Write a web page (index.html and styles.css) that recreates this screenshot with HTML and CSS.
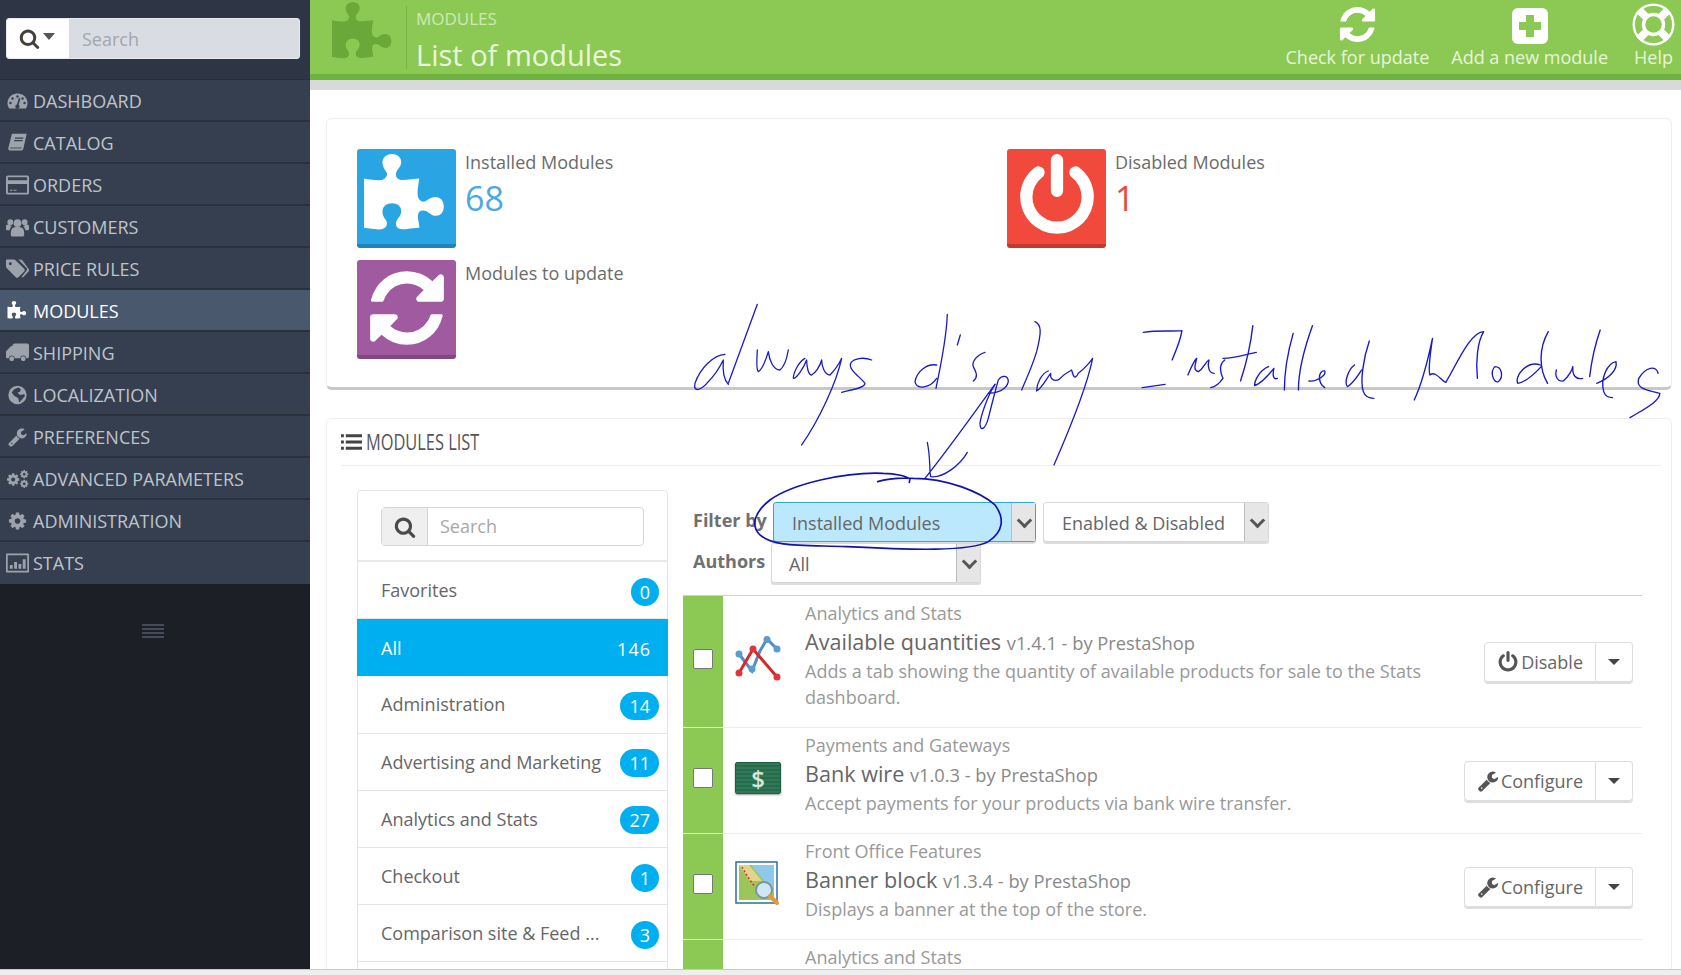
FILE: index.html
```html
<!DOCTYPE html>
<html lang="en">
<head>
    <meta charset="UTF-8">
    <title>List of modules</title>
    <link rel="stylesheet" href="styles.css">
</head>
<body>
    <svg class="defs" width="0" height="0">
        <symbol id="i-search" viewBox="0 0 1792 1792"><path d="M1216 832q0-185-131.500-316.500t-316.500-131.500-316.500 131.500-131.500 316.500 131.500 316.500 316.500 131.500 316.500-131.500 131.500-316.500zm512 832q0 52-38 90t-90 38q-54 0-90-38l-343-342q-179 124-399 124-143 0-273.500-55.500t-225-150-150-225-55.500-273.500 55.500-273.500 150-225 225-150 273.500-55.500 273.500 55.500 225 150 150 225 55.500 273.500q0 220-124 399l343 343q37 37 37 90z"/></symbol>
        <symbol id="i-puzzle" viewBox="0 0 1792 1792"><path d="M1664 1098q0 81-44.500 135t-123.500 54q-41 0-77.500-17.500t-59-38-56.500-38-71-17.500q-110 0-110 124 0 39 16 115t15 115v5q-22 0-33 1-34 3-97.500 11.500t-115.500 13.500-98 5q-61 0-103-26.500t-42-83.500q0-37 17.500-71t38-56.500 38-59 17.500-77.500q0-79-54-123.500t-135-44.500q-84 0-143 45.500t-59 127.500q0 43 15 83t33.500 64.500 33.500 53 15 50.500q0 45-46 89-37 35-117 35-95 0-245-24-9-2-27.500-4t-27.500-4l-13-2q-1 0-3-1-2 0-2-1v-1024q2 1 17.500 3.500t34 5 21.500 3.500q150 24 245 24 80 0 117-35 46-44 46-89 0-22-15-50.500t-33.500-53-33.500-64.500-15-83q0-82 59-127.500t144-45.500q80 0 134 44.500t54 123.500q0 41-17.500 77.500t-38 59-38 56.500-17.500 71q0 57 42 83.500t103 26.500q64 0 180-15t163-17v2q-1 2-3.500 17.500t-5 34-3.500 21.500q-24 150-24 245 0 80 35 117 44 46 89 46 22 0 50.500-15t53-33.500 64.500-33.500 83-15q82 0 127.500 59t45.500 143z"/></symbol>
        <symbol id="i-refresh" viewBox="0 0 1792 1792"><path d="M1639 1056q0 5-1 7-64 268-268 434.500t-478 166.500q-146 0-282.500-55t-243.500-157l-129 129q-19 19-45 19t-45-19-19-45v-448q0-26 19-45t45-19h448q26 0 45 19t19 45-19 45l-137 137q71 66 161 102t187 36q134 0 250-65t186-179q11-17 53-117 8-23 30-23h192q13 0 22.500 9.500t9.500 22.500zm25-800v448q0 26-19 45t-45 19h-448q-26 0-45-19t-19-45 19-45l138-138q-148-137-349-137-134 0-250 65t-186 179q-11 17-53 117-8 23-30 23h-199q-13 0-22.500-9.500t-9.500-22.500v-7q65-268 270-434.500t480-166.500q146 0 284 55.500t245 156.500l130-129q19-19 45-19t45 19 19 45z"/></symbol>
        <symbol id="i-wrench" viewBox="0 0 1792 1792"><path d="M448 1472q0-26-19-45t-45-19-45 19-19 45 19 45 45 19 45-19 19-45zm644-420l-682 682q-37 37-90 37-52 0-91-37l-106-108q-38-36-38-90 0-53 38-91l681-681q39 98 114.500 173.500t173.500 114.500zm634-435q0 39-23 106-47 134-164.500 217.500t-258.500 83.500q-185 0-316.500-131.500t-131.500-316.500 131.500-316.500 316.500-131.500q58 0 121.500 16.500t107.500 46.500q16 11 16 28t-16 28l-293 169v224l193 107q5-3 79-48.500t135.500-81 70.500-35.500q15 0 23.500 10t8.500 25z"/></symbol>
        <symbol id="i-cog" viewBox="0 0 1792 1792"><path d="M1152 896q0-106-75-181t-181-75-181 75-75 181 75 181 181 75 181-75 75-181zm512-109v222q0 12-8 23t-20 13l-185 28q-19 54-39 91 35 50 107 138 10 12 10 25t-9 23q-27 37-99 108t-94 71q-12 0-26-9l-138-108q-44 23-91 38-16 136-29 186-7 28-36 28h-222q-14 0-24.500-8.500t-11.500-21.500l-28-184q-49-16-90-37l-141 107q-10 9-25 9-14 0-25-11-126-114-165-168-7-10-7-23 0-12 8-23 15-21 51-66.500t54-70.500q-27-50-41-99l-183-27q-13-2-21-12.500t-8-23.500v-222q0-12 8-23t19-13l186-28q14-46 39-92-40-57-107-138-10-12-10-24 0-10 9-23 26-36 98.500-107.500t94.500-71.500q13 0 26 10l138 107q44-23 91-38 16-136 29-186 7-28 36-28h222q14 0 24.500 8.500t11.500 21.500l28 184q49 16 90 37l142-107q9-9 24-9 13 0 25 10 129 119 165 170 7 8 7 22 0 12-8 23-15 21-51 66.500t-54 70.500q26 50 41 98l183 28q13 2 21 12.500t8 23.500z"/></symbol>
        <symbol id="i-power" viewBox="0 0 1792 1792"><path d="M1664 896q0 156-61 298t-164 245-245 164-298 61-298-61-245-164-164-245-61-298q0-182 80.500-343t226.500-270q43-32 95.500-25t83.500 50q32 42 24.500 94.500t-49.500 84.500q-98 74-151.500 181t-53.500 228q0 104 40.500 198.500t109.500 163.500 163.500 109.500 198.500 40.500 198.500-40.500 163.500-109.500 109.500-163.500 40.500-198.500q0-121-53.500-228t-151.500-181q-42-32-49.500-84.500t24.500-94.500q31-43 84-50t95 25q146 109 226.500 270t80.500 343zm-640-768v640q0 52-38 90t-90 38-90-38-38-90v-640q0-52 38-90t90-38 90 38 38 90z"/></symbol>
        <symbol id="i-gauge" viewBox="0 0 24 24"><path d="M12 3C5.500 3 0 8 0 14.500c0 2.500.8 4.600 2 6.500h20c1.200-1.900 2-4 2-6.500C24 8 18.500 3 12 3z"/><g fill="#363f50"><circle cx="12" cy="6.500" r="1.500"/><circle cx="6" cy="9" r="1.500"/><circle cx="3.500" cy="14.500" r="1.500"/><circle cx="20.500" cy="14.500" r="1.500"/><circle cx="18" cy="9" r="1.500"/><path d="M13.500 8.500l2 .6-2 7.500a2.600 2.600 0 1 1-2-.5z"/></g></symbol>
        <symbol id="i-book" viewBox="0 0 24 24"><path d="M6 1h17l-4 18c-.3 1.200-1 2-2.200 2H3c-1.500 0-2.500-1.400-2-3L5 2.500C5.200 1.600 5.400 1 6 1z"/><path d="M9 6h10M8 9h10" stroke="#363f50" stroke-width="1.500"/><path d="M3 18h14" stroke="#363f50" stroke-width="1"/></symbol>
        <symbol id="i-card" viewBox="0 0 24 20"><path d="M2 0h20a2 2 0 0 1 2 2v16a2 2 0 0 1-2 2H2a2 2 0 0 1-2-2V2a2 2 0 0 1 2-2zm0 2v3h20V2zm0 7v9h20V9zm2 6h3v1H4zm4 0h3v1H8z" fill-rule="evenodd"/></symbol>
        <symbol id="i-users" viewBox="0 0 24 20"><circle cx="12" cy="6" r="4"/><circle cx="4.500" cy="5" r="3"/><circle cx="19.500" cy="5" r="3"/><path d="M6 12c1-1.500 3-2 6-2s5 .5 6 2c.7 1 1 3 1 6 0 1.200-1 2-2 2H7c-1 0-2-.8-2-2 0-3 .3-5 1-6z"/><path d="M0 9c0-1 1-1.500 4-1.500.6 1 1 1.500 2 2-1.500 1-2 3-2.200 4H1.500C.5 13.500 0 13 0 12zM24 9c0-1-1-1.500-4-1.500-.6 1-1 1.500-2 2 1.500 1 2 3 2.200 4h2.300c1 0 1.500-.5 1.500-1.500z"/></symbol>
        <symbol id="i-tags" viewBox="0 0 24 20"><path d="M1 0h7c.8 0 1.500.3 2 .8l9 9c.8.8.8 2 0 2.800l-6 6c-.8.8-2 .8-2.800 0l-9-9C.6 9 0 8.300 0 7.500V1c0-.6.4-1 1-1zm3.500 3A1.500 1.500 0 1 0 4.500 6a1.500 1.500 0 0 0 0-3z" fill-rule="evenodd"/><path d="M13 0h2c.8 0 1.500.3 2 .8l6.500 9c.8.800.8 2 0 2.800l-5.500 6h-2l5.700-7.300c.5-.7.500-1.300 0-2z"/></symbol>
        <symbol id="i-truck" viewBox="0 0 24 20"><path d="M9 0h13c1 0 2 1 2 2v12c0 1-1 1.500-2 1.500h-1a3 3 0 0 0-6 0h-6a3 3 0 0 0-6 0H1c-.6 0-1-.4-1-1V9c0-.6.300-1.200.8-1.700l4-4C5.300 2.800 6 2.500 7 2.500V2c0-1 1-2 2-2z"/><circle cx="6" cy="16" r="2.500"/><circle cx="18" cy="16" r="2.500"/></symbol>
        <symbol id="i-globe" viewBox="0 0 24 24"><path d="M12 1a11 11 0 1 0 0 22 11 11 0 0 0 0-22zm-4 4l5-2 3 2-1 3-3 1 3 3 5-1 1 2-4 5-3 3-1-5-5-3-3-4z" fill-rule="evenodd"/></symbol>
        <symbol id="i-cogs" viewBox="0 0 24 20"><use href="#i-cog" x="0" y="3" width="15" height="15"/><use href="#i-cog" x="14" y="0" width="10" height="10"/><use href="#i-cog" x="14" y="10" width="10" height="10"/></symbol>
        <symbol id="i-chart" viewBox="0 0 24 20"><path d="M1 0h22c.6 0 1 .4 1 1v18c0 .6-.4 1-1 1H1c-.6 0-1-.4-1-1V1c0-.6.4-1 1-1zm.8 1.800v16.400h20.400V1.800zM4 12h3v4H4zm4.500-3h3v7h-3zm4.500 2h3v5h-3zm4.500-5h3v10h-3z" fill-rule="evenodd"/></symbol>
    </svg>

    <div class="page">
        <aside class="sidebar">
            <div class="side-top">
                <div class="side-search">
                    <span class="side-search-btn">
                        <svg class="ic-search-top"><use href="#i-search"/></svg>
                        <span class="caret-top"></span>
                    </span>
                    <span class="side-search-text">Search</span>
                </div>
            </div>
            <nav class="menu">
                <a class="menu-item"><svg class="menu-ic"><use href="#i-gauge"/></svg>Dashboard</a>
                <a class="menu-item"><svg class="menu-ic"><use href="#i-book"/></svg>Catalog</a>
                <a class="menu-item"><svg class="menu-ic"><use href="#i-card"/></svg>Orders</a>
                <a class="menu-item"><svg class="menu-ic"><use href="#i-users"/></svg>Customers</a>
                <a class="menu-item"><svg class="menu-ic"><use href="#i-tags"/></svg>Price rules</a>
                <a class="menu-item active"><svg class="menu-ic"><use href="#i-puzzle"/></svg>Modules</a>
                <a class="menu-item"><svg class="menu-ic"><use href="#i-truck"/></svg>Shipping</a>
                <a class="menu-item"><svg class="menu-ic"><use href="#i-globe"/></svg>Localization</a>
                <a class="menu-item"><svg class="menu-ic"><use href="#i-wrench"/></svg>Preferences</a>
                <a class="menu-item"><svg class="menu-ic"><use href="#i-cogs"/></svg>Advanced parameters</a>
                <a class="menu-item"><svg class="menu-ic"><use href="#i-cog"/></svg>Administration</a>
                <a class="menu-item"><svg class="menu-ic"><use href="#i-chart"/></svg>Stats</a>
            </nav>
            <div class="collapse-bars"><span></span><span></span><span></span><span></span></div>
        </aside>

        <main class="main">
            <header class="head">
                <svg class="head-puzzle"><use href="#i-puzzle"/></svg>
                <div class="head-titles">
                    <div class="head-crumb">MODULES</div>
                    <div class="head-title">List of modules</div>
                </div>
                <div class="toolbar">
                    <a class="tool tool-update">
                        <svg class="tool-ic"><use href="#i-refresh"/></svg>
                        Check for update
                    </a>
                    <a class="tool tool-add">
                        <svg class="tool-ic" viewBox="0 0 36 36"><rect width="36" height="36" rx="6" fill="#fff"/><path d="M14 7h8v7h7v8h-7v7h-8v-7H7v-8h7z" fill="#8bc954"/></svg>
                        Add a new module
                    </a>
                    <a class="tool tool-help">
                        <svg class="tool-ic help-ic" viewBox="0 0 44 44">
                            <circle cx="22" cy="22" r="21.500" fill="#fff"/>
                            <circle cx="22" cy="22" r="15.500" fill="none" stroke="#8bc954" stroke-width="7"/>
                            <path d="M14 14L7 7M30 14l7-7M14 30l-7 7M30 30l7 7" stroke="#fff" stroke-width="8"/>
                            <circle cx="22" cy="22" r="8.500" fill="#8bc954"/>
                        </svg>
                        Help
                    </a>
                </div>
            </header>

            <div class="content">
                <section class="card card-stats">
                    <div class="stat">
                        <div class="stat-box blue"><svg><use href="#i-puzzle"/></svg></div>
                        <div>
                            <div class="stat-label">Installed Modules</div>
                            <div class="stat-num num-blue">68</div>
                        </div>
                    </div>
                    <div class="stat">
                        <div class="stat-box red"><svg><use href="#i-power"/></svg></div>
                        <div>
                            <div class="stat-label">Disabled Modules</div>
                            <div class="stat-num num-red">1</div>
                        </div>
                    </div>
                    <div class="stat">
                        <div class="stat-box purple"><svg><use href="#i-refresh"/></svg></div>
                        <div>
                            <div class="stat-label">Modules to update</div>
                        </div>
                    </div>
                </section>

                <section class="card card-list">
                    <h3 class="list-head">
                        <svg class="list-ic" viewBox="0 0 22 16"><path d="M0 0h3v3H0zM5 0h17v3H5zM0 6.500h3v3H0zM5 6.500h17v3H5zM0 13h3v3H0zM5 13h17v3H5z"/></svg>
                        <span class="list-title">MODULES LIST</span>
                    </h3>
                    <div class="list-body">
                        <div class="cats">
                            <div class="cats-search">
                                <div class="input-group">
                                    <span class="input-addon"><svg><use href="#i-search"/></svg></span>
                                    <span class="input-text">Search</span>
                                </div>
                            </div>
                            <div class="cat"><span>Favorites</span><b class="badge">0</b></div>
                            <div class="cat cat-on"><span>All</span><b class="badge">146</b></div>
                            <div class="cat"><span>Administration</span><b class="badge">14</b></div>
                            <div class="cat"><span>Advertising and Marketing</span><b class="badge">11</b></div>
                            <div class="cat"><span>Analytics and Stats</span><b class="badge">27</b></div>
                            <div class="cat"><span>Checkout</span><b class="badge">1</b></div>
                            <div class="cat"><span>Comparison site &amp; Feed ...</span><b class="badge">3</b></div>
                        </div>

                        <div class="mods">
                            <div class="filters">
                                <div class="filter-row">
                                    <label class="filter-label">Filter by</label>
                                    <div class="sel sel-type sel-on"><span>Installed Modules</span><i class="sel-arrow"></i></div>
                                    <div class="sel sel-state"><span>Enabled &amp; Disabled</span><i class="sel-arrow"></i></div>
                                </div>
                                <div class="filter-row">
                                    <label class="filter-label">Authors</label>
                                    <div class="sel sel-author"><span>All</span><i class="sel-arrow"></i></div>
                                </div>
                            </div>

                            <div class="mod-list">
                                <div class="mod">
                                    <div class="mod-check"><span class="box"></span></div>
                                    <div class="mod-ic">
                                        <svg viewBox="0 0 46 46" width="46" height="46">
                                            <path d="M4 18l13 17 8-20 7-12 10 10" fill="none" stroke="#4f8fc4" stroke-width="3"/>
                                            <path d="M4 37l14-24 24 28" fill="none" stroke="#d9262b" stroke-width="3"/>
                                            <g fill="#5b9bd0"><circle cx="4" cy="18" r="3.500"/><circle cx="17" cy="33" r="3.500"/><circle cx="32" cy="3.500" r="3.500"/><circle cx="42" cy="13" r="3.500"/></g>
                                            <g fill="#e0353a"><circle cx="4" cy="37" r="3.500"/><circle cx="18" cy="13" r="3.500"/><circle cx="42" cy="41" r="3.500"/></g>
                                        </svg>
                                    </div>
                                    <div class="mod-info">
                                        <div class="mod-cat">Analytics and Stats</div>
                                        <div class="mod-name">Available quantities <small>v1.4.1 - by PrestaShop</small></div>
                                        <div class="mod-desc">Adds a tab showing the quantity of available products for sale to the Stats dashboard.</div>
                                    </div>
                                    <div class="mod-act">
                                        <a class="btn"><svg><use href="#i-power"/></svg>Disable</a>
                                        <a class="btn-caret"><i></i></a>
                                    </div>
                                </div>

                                <div class="mod">
                                    <div class="mod-check"><span class="box"></span></div>
                                    <div class="mod-ic">
                                        <div class="bank-note">$</div>
                                    </div>
                                    <div class="mod-info">
                                        <div class="mod-cat">Payments and Gateways</div>
                                        <div class="mod-name">Bank wire <small>v1.0.3 - by PrestaShop</small></div>
                                        <div class="mod-desc">Accept payments for your products via bank wire transfer.</div>
                                    </div>
                                    <div class="mod-act">
                                        <a class="btn"><svg><use href="#i-wrench"/></svg>Configure</a>
                                        <a class="btn-caret"><i></i></a>
                                    </div>
                                </div>

                                <div class="mod">
                                    <div class="mod-check"><span class="box"></span></div>
                                    <div class="mod-ic">
                                        <svg viewBox="0 0 46 46" width="46" height="46">
                                            <rect x="1" y="1" width="41" height="41" fill="#fff" stroke="#2d6fa3" stroke-width="1.500"/>
                                            <rect x="4" y="4" width="35" height="35" fill="#8fc8e8"/>
                                            <path d="M4 4h12l23 28v7H4z" fill="#9cc65a"/>
                                            <path d="M4 4h10l13 16-12 0z" fill="#e4d48a"/>
                                            <path d="M7 6l4 7 4 6 5 7" fill="none" stroke="#c33" stroke-width="1.500" stroke-dasharray="2 2"/>
                                            <circle cx="29" cy="29" r="8" fill="#cfe7f5" stroke="#7d93a3" stroke-width="2"/>
                                            <path d="M35 35l7 7" stroke="#e39a3b" stroke-width="4" stroke-linecap="round"/>
                                        </svg>
                                    </div>
                                    <div class="mod-info">
                                        <div class="mod-cat">Front Office Features</div>
                                        <div class="mod-name">Banner block <small>v1.3.4 - by PrestaShop</small></div>
                                        <div class="mod-desc">Displays a banner at the top of the store.</div>
                                    </div>
                                    <div class="mod-act">
                                        <a class="btn"><svg><use href="#i-wrench"/></svg>Configure</a>
                                        <a class="btn-caret"><i></i></a>
                                    </div>
                                </div>

                                <div class="mod">
                                    <div class="mod-check"></div>
                                    <div class="mod-ic"></div>
                                    <div class="mod-info">
                                        <div class="mod-cat">Analytics and Stats</div>
                                    </div>
                                </div>
                            </div>
                        </div>
                    </div>
                </section>
            </div>
        </main>
    </div>
    <div class="page-foot"></div>

    <!-- pen scribble drawn over the screenshot -->
    <svg class="scribble" width="1681" height="975" viewBox="0 0 1681 975">
        <g transform="translate(680 295) scale(.3333)">
            <path d="M135 178C100 180 60 220 45 265C38 295 65 285 85 260C105 240 120 215 130 195C128 220 128 250 145 268M232 28L145 265"/>
            <path d="M232 165C230 195 228 225 235 230C245 225 258 195 265 170C268 195 280 225 300 225C312 215 320 195 325 165"/>
            <path d="M375 190C355 200 340 235 340 250C350 250 370 220 380 195C380 215 385 240 395 240C405 235 420 215 425 195C425 215 435 240 450 240C465 225 478 205 485 190C470 260 420 370 365 450"/>
            <path d="M575 195C550 185 520 190 512 205C505 225 540 245 555 265C555 280 510 285 485 292"/>
            <path d="M770 210C740 205 710 230 705 260C710 285 750 280 770 250M802 58C800 120 785 200 768 280"/>
            <path d="M841 120L832 150M915 172C890 180 875 200 880 215C890 235 895 245 880 258"/>
            <path d="M945 268C930 290 905 350 900 385C900 410 915 405 925 370C935 330 945 290 955 255C965 240 985 240 985 260C980 285 950 295 925 295"/>
            <path d="M945 268C900 330 800 470 735 550M742 442C752 490 748 530 752 545C790 550 840 510 862 472"/>
            <path d="M1065 80C1085 90 1085 110 1070 170C1055 220 1035 260 1025 285"/>
            <path d="M1105 228C1085 235 1070 265 1070 288C1085 280 1100 250 1112 235C1110 250 1120 260 1135 255C1150 240 1165 230 1175 225C1180 245 1185 255 1195 235C1215 220 1235 195 1238 190C1220 280 1170 400 1122 510"/>
            <path class="ring" d="M593 560C630 548 660 548 700 550C800 550 900 590 945 630C975 670 970 710 925 740C870 770 700 765 500 755C350 750 280 755 240 720C210 690 225 650 270 615C340 565 500 530 610 535C650 535 680 545 690 552L688 562"/>
        </g>
        <g transform="translate(1130 295) scale(.3509 .3333)">
            <path d="M38 112C80 105 120 110 148 107C145 130 130 170 120 195M35 278L100 268"/>
            <path d="M165 240C175 215 185 195 190 190C185 215 180 225 195 230C210 220 215 200 225 195C220 215 225 235 240 235"/>
            <path d="M270 195C250 210 260 240 265 250C255 265 245 275 230 278"/>
            <path d="M350 92C345 140 330 210 315 258M265 190C300 190 340 175 360 172"/>
            <path d="M395 215C370 225 355 255 355 272C375 265 395 240 410 220C405 245 410 255 420 250"/>
            <path d="M465 115C450 170 440 235 440 285M520 92C500 150 480 230 480 285"/>
            <path d="M510 258C535 260 560 240 555 228C535 225 535 265 555 278"/>
            <path d="M640 210C620 225 610 265 620 275C640 260 650 240 660 225M682 138C665 190 655 260 665 290C670 305 680 310 695 310"/>
            <path d="M810 315C830 270 850 190 862 130C855 180 850 230 855 240C870 225 890 260 900 262C930 210 970 110 1008 110C990 140 985 200 990 250"/>
            <path d="M1040 215C1025 230 1035 265 1050 260C1065 245 1060 215 1040 215"/>
            <path d="M1170 210C1130 195 1095 245 1105 265C1125 262 1150 240 1172 215M1192 110C1165 160 1165 220 1190 265"/>
            <path d="M1215 225C1210 245 1220 262 1235 258C1250 245 1260 225 1262 215C1260 240 1270 255 1290 250"/>
            <path d="M1340 105C1325 150 1315 200 1310 245"/>
            <path d="M1330 265C1365 250 1390 225 1385 200C1360 205 1340 250 1350 290C1355 305 1365 308 1375 308"/>
            <path d="M1505 235C1500 210 1470 215 1450 250C1440 280 1470 285 1510 295C1510 320 1460 345 1425 368"/>
        </g>
    </svg>
</body>
</html>
```

FILE: styles.css
```css
* {
    box-sizing: border-box;
}
html, body {
    margin: 0;
    padding: 0;
}
body {
    width: 1681px;
    height: 975px;
    overflow: hidden;
    position: relative;
    font-family: 'Open Sans', sans-serif;
    font-size: 18px;
    color: #666;
    background-color: #eee;
}
.defs {
    position: absolute;
}
.page {
    display: flex;
    height: 970px;
    overflow: hidden;
    border-bottom: 1px solid #c9c9c9;
}
.page-foot {
    height: 5px;
    background-color: #eee;
}

/* Sidebar */
.sidebar {
    width: 310px;
    flex: none;
    background-color: #1c1f26;
}
.side-top {
    height: 80px;
    padding: 18px 10px 0 6px;
    background-color: #2e3545;
    border-bottom: 1px solid #282e3b;
}
.side-search {
    display: flex;
    height: 41px;
    background-color: #d9dce3;
    border-radius: 3px;
    border: 1px solid #e8eaee;
}
.side-search-btn {
    display: flex;
    align-items: center;
    width: 62px;
    padding-left: 12px;
    background-color: #fff;
    border-radius: 3px 0 0 3px;
}
.ic-search-top {
    width: 21px;
    height: 21px;
    fill: #45413a;
}
.caret-top {
    margin: 0 0 5px 3px;
    border-top: 7px solid #555;
    border-left: 6px solid transparent;
    border-right: 6px solid transparent;
}
.side-search-text {
    padding: 8px 0 0 13px;
    color: #a2a6ad;
}
.menu-item {
    display: flex;
    align-items: center;
    height: 42px;
    padding-top: 1px;
    color: #bfc4cb;
    background-color: #363f50;
    border-bottom: 2px solid #2a303c;
    text-transform: uppercase;
    font-size: 18px;
}
.menu-item.active {
    color: #fff;
    background-color: #4a586e;
}
.menu-item:last-child {
    padding-top: 0;
    border-bottom: 0;
}
.menu-ic {
    flex: none;
    width: 23px;
    height: 20px;
    margin: 0 4px 0 6px;
    fill: #9da3ad;
}
.active .menu-ic {
    fill: #fff;
}
.collapse-bars {
    width: 22px;
    margin: 40px 0 0 142px;
}
.collapse-bars span {
    display: block;
    height: 2px;
    margin-bottom: 2px;
    background-color: #454b58;
}

/* Green page header */
.main {
    flex: 1;
    min-width: 0;
    background-color: #fff;
}
.head {
    display: flex;
    height: 90px;
    padding-left: 22px;
    background-color: #8bc954;
    border-bottom: 10px solid #d9d9d9;
    box-shadow: inset 0 -6px 0 #6db33f;
}
.head-puzzle {
    width: 64px;
    height: 64px;
    margin-top: 2px;
    fill: #6aa83a;
}
.head-titles {
    height: 63px;
    margin: 6px 0 0 10px;
    padding-left: 9px;
    border-left: 1px solid #74b545;
}
.head-crumb {
    font-size: 17px;
    line-height: 25px;
    color: #cfe9b2;
}
.head-title {
    padding-top: 3px;
    font-size: 29px;
    line-height: 42px;
    color: #eaf6dc;
}
.toolbar {
    display: flex;
    margin-left: auto;
    padding-right: 6px;
}
.tool {
    display: flex;
    flex-direction: column;
    align-items: center;
    margin-left: 22px;
    font-size: 18px;
    line-height: 24px;
    color: #e8f5d9;
}
.tool-help {
    margin-left: 24px;
}
.tool-ic {
    width: 41px;
    height: 41px;
    margin-top: 4px;
    fill: #fff;
}
.tool-add .tool-ic {
    width: 36px;
    height: 36px;
    margin: 8px 0 1px;
}
.help-ic {
    width: 43px;
    height: 43px;
    margin: 3px 0 -1px;
}

/* Cards */
.content {
    padding: 28px 9px 0 16px;
}
.card {
    background-color: #fff;
    border: 1px solid #eee;
    border-radius: 6px;
}
.card-stats {
    display: grid;
    grid-template-columns: 650px 1fr;
    align-content: start;
    row-gap: 12px;
    height: 272px;
    padding: 30px 30px 0;
    border-bottom: 3px solid #c8c8c8;
}
.stat {
    display: flex;
}
.stat-box {
    flex: none;
    display: flex;
    align-items: center;
    justify-content: center;
    width: 99px;
    height: 99px;
    margin-right: 9px;
    border-radius: 3px;
    border-bottom: 4px solid rgba(0, 0, 0, 0.2);
}
.stat-box svg {
    width: 86px;
    height: 86px;
    fill: #fff;
}
.blue {
    background-color: #2aa5e3;
}
.red {
    background-color: #f2493d;
}
.purple {
    background-color: #a05ba0;
}
.stat-label {
    line-height: 26px;
    color: #6b6b6b;
}
.stat-num {
    font-size: 34px;
    line-height: 46px;
}
.num-blue {
    color: #4ea8e0;
}
.num-red {
    color: #ea4a3e;
}

.card-list {
    margin-top: 28px;
    height: 640px;
}
.list-head {
    display: flex;
    align-items: center;
    height: 47px;
    margin: 0 10px 0 14px;
    font-size: 21px;
    font-weight: normal;
    color: #555;
    border-bottom: 1px solid #eee;
}
.list-ic {
    flex: none;
    width: 21px;
    height: 16px;
    margin-right: 4px;
    fill: #444;
}
.list-title {
    display: inline-block;
    transform: scaleX(0.78);
    transform-origin: left center;
}
.list-body {
    display: flex;
    padding: 24px 0 0 30px;
}

/* Category list */
.cats {
    flex: none;
    width: 311px;
    border: 1px solid #e4e4e4;
    border-radius: 4px 4px 0 0;
}
.cats-search {
    height: 71px;
    padding: 16px 23px 0;
    border-bottom: 2px solid #e8e8e8;
}
.input-group {
    display: flex;
    height: 39px;
    border: 1px solid #d6d6d6;
    border-radius: 4px;
}
.input-addon {
    display: flex;
    align-items: center;
    justify-content: center;
    width: 46px;
    background-color: #efefef;
    border-right: 1px solid #d6d6d6;
}
.input-addon svg {
    width: 22px;
    height: 22px;
    fill: #4a4a4a;
}
.input-text {
    padding: 6px 0 0 12px;
    color: #a8a8a8;
}
.cat {
    display: flex;
    align-items: center;
    justify-content: space-between;
    height: 57.200px;
    padding: 0 8px 0 23px;
    border-bottom: 1px solid #e4e4e4;
    color: #666;
}
.badge {
    min-width: 28px;
    height: 28px;
    margin-top: 3px;
    padding: 0 9px;
    font-weight: normal;
    line-height: 28px;
    text-align: center;
    color: #fff;
    background-color: #00aff0;
    border-radius: 14px;
}
.cat-on {
    margin: 0 -1px;
    padding-left: 24px;
    color: #fff;
    background-color: #00aff0;
    border-bottom: 0;
}
.cat-on .badge {
    padding: 0 9px 0 0;
    letter-spacing: 1px;
}

/* Filters */
.mods {
    flex: none;
    width: 959px;
    margin-left: 15px;
}
.filters {
    height: 105px;
    padding: 12px 0 0 10px;
}
.filter-row {
    display: flex;
    height: 41px;
}
.filter-label {
    width: 80px;
    padding-top: 6px;
    font-weight: 700;
    color: #707070;
}
.sel {
    display: flex;
    justify-content: space-between;
    height: 40px;
    padding-left: 18px;
    margin-right: 7px;
    line-height: 40px;
    background-color: #fff;
    border: 1px solid #d8d8d8;
    border-radius: 3px;
    box-shadow: 0 2px 0 #ddd;
}
.sel-type {
    width: 263px;
}
.sel-state {
    width: 226px;
}
.sel-author {
    width: 210px;
    margin-left: -2px;
    padding-left: 17px;
}
.sel-on {
    background-color: #bbe8fd;
    border-color: #29abe2;
}
.sel-arrow {
    position: relative;
    width: 24px;
    background-color: #e6e6e6;
    border-left: 1px solid #bbb;
}
.sel-arrow::after {
    content: "";
    position: absolute;
    left: 7px;
    top: 12px;
    width: 8px;
    height: 8px;
    border-right: 3px solid #555;
    border-bottom: 3px solid #555;
    transform: rotate(45deg);
}

/* Module rows */
.mod-list {
    border-top: 1px solid #b6dbe4;
}
.mod {
    display: flex;
    border-bottom: 1px solid #ececec;
}
.mod-check {
    flex: none;
    display: flex;
    align-items: center;
    justify-content: center;
    width: 40px;
    padding-bottom: 6px;
    background-color: #8bc954;
}
.box {
    width: 20px;
    height: 20px;
    background-color: #fff;
    border: 1px solid #777;
    border-radius: 2px;
}
.mod-ic {
    flex: none;
    display: flex;
    align-items: center;
    width: 82px;
    padding: 0 0 6px 12px;
}
.bank-note {
    width: 46px;
    height: 32px;
    font-size: 24px;
    font-weight: 600;
    line-height: 32px;
    text-align: center;
    color: #d5e8d8;
    background: repeating-linear-gradient(0deg, #2e7a58 0, #2e7a58 2px, #276b4c 2px, #276b4c 4px);
    border: 1px solid #1f5c40;
    border-radius: 2px;
    box-shadow: 0 1px 2px rgba(0, 0, 0, 0.4);
}
.mod-info {
    flex: 1;
    min-width: 0;
    padding: 5px 0 17px;
}
.mod-cat {
    line-height: 25px;
    color: #999;
}
.mod-name {
    font-size: 21.600px;
    line-height: 31px;
    color: #666;
}
.mod-name small {
    font-size: 18.300px;
    color: #888;
}
.mod-desc {
    max-width: 640px;
    line-height: 26px;
    color: #999;
}
.mod-act {
    flex: none;
    display: flex;
    align-self: center;
    margin: 0 9px 0 24px;
    height: 40px;
}
.btn {
    display: flex;
    align-items: center;
    padding: 0 12px;
    font-size: 18px;
    color: #666;
    border: 1px solid #ddd;
    border-radius: 4px 0 0 4px;
    box-shadow: 0 2px 0 #ddd;
}
.btn svg {
    width: 22px;
    height: 22px;
    margin-right: 2px;
    fill: #555;
}
.btn-caret {
    display: flex;
    align-items: center;
    justify-content: center;
    width: 37px;
    border: 1px solid #ddd;
    border-left: 0;
    border-radius: 0 4px 4px 0;
    box-shadow: 0 2px 0 #ddd;
}
.btn-caret i {
    border-top: 6px solid #444;
    border-left: 6px solid transparent;
    border-right: 6px solid transparent;
}

/* Pen marks lie over the whole shot */
.scribble {
    position: absolute;
    left: 0;
    top: 0;
    pointer-events: none;
}
.scribble path {
    fill: none;
    stroke: #1a1ac8;
    stroke-width: 3.900;
    stroke-linecap: round;
    stroke-linejoin: round;
}
.scribble .ring {
    stroke: #1212b0;
    stroke-width: 5;
}
```
